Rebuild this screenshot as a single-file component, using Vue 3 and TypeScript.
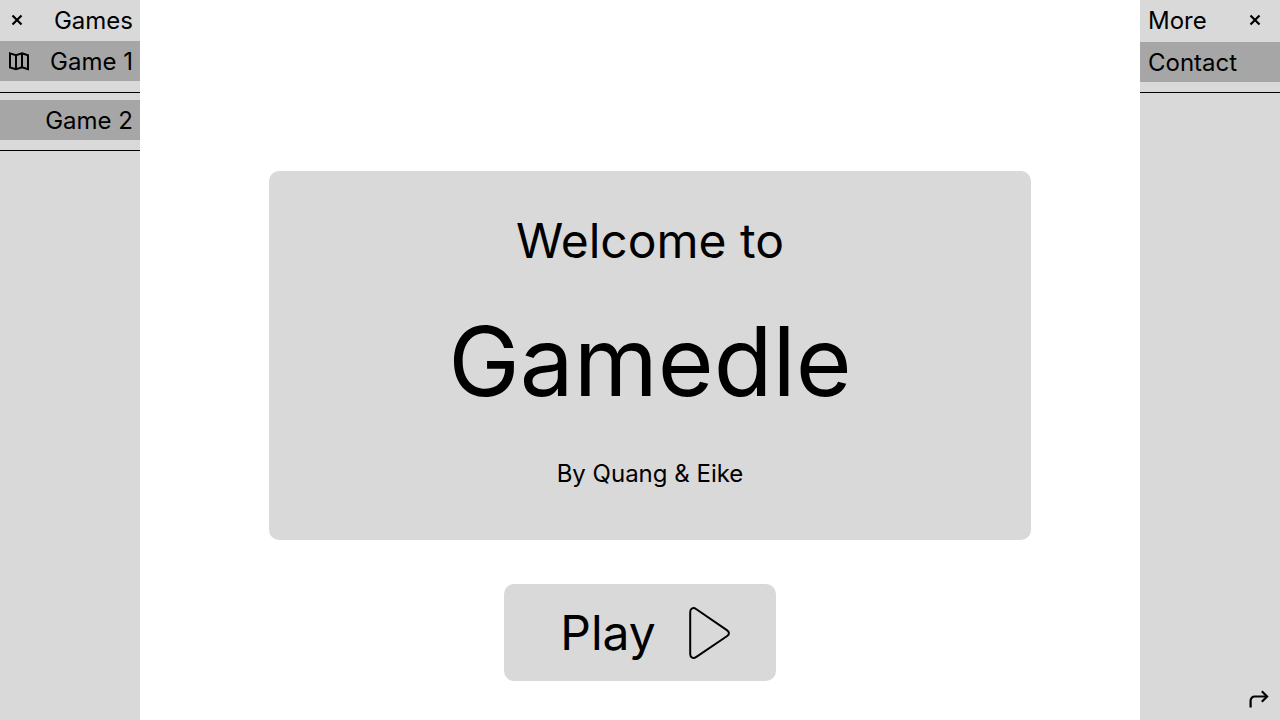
<script setup lang="ts">
import { ref } from 'vue'

interface Game {
  name: string
  icon?: 'map'
}

const games: Game[] = [{ name: 'Game 1', icon: 'map' }, { name: 'Game 2' }]
const links: string[] = ['Contact']

const gamesOpen = ref(true)
const moreOpen = ref(true)
</script>

<template>
  <div class="page">
    <nav class="sidebar games" aria-label="Games">
      <header class="head">
        <button class="icon-button" type="button" aria-label="Toggle games" @click="gamesOpen = !gamesOpen">
          <svg width="18" height="18" viewBox="0 0 18 18" fill="none" stroke="currentColor" stroke-width="2.2">
            <path d="M4.5 4.5l9 9M13.5 4.5l-9 9" />
          </svg>
        </button>
        <h2>Games</h2>
      </header>
      <ul v-if="gamesOpen">
        <li v-for="game in games" :key="game.name">
          <a href="#">
            <svg v-if="game.icon === 'map'" class="map" width="22" height="20" viewBox="0 0 22 20" fill="none" stroke="currentColor" stroke-width="2">
              <path d="M2 2.4l6 1.8 6-1.8 6 1.8v14l-6-1.8-6 1.8-6-1.8z" />
              <path d="M8 4v14M14 2.4v14" />
            </svg>
            <span>{{ game.name }}</span>
          </a>
        </li>
      </ul>
    </nav>

    <main>
      <section class="card">
        <p class="welcome">Welcome to</p>
        <h1>Gamedle</h1>
        <p class="authors">By Quang &amp; Eike</p>
      </section>
      <button class="play" type="button">
        <span>Play</span>
        <svg width="44" height="54" viewBox="0 0 44 54" fill="none" stroke="currentColor" stroke-width="2">
          <path d="M2.2 6C2.2 2.2 5.2 1 8.4 3.2L39.2 24.4C41.5 26 41.5 28.4 39.2 30L8.4 50.8C5.2 53 2.2 51.8 2.2 48Z" />
        </svg>
      </button>
    </main>

    <nav class="sidebar more" aria-label="More">
      <header class="head">
        <h2>More</h2>
        <button class="icon-button" type="button" aria-label="Toggle more" @click="moreOpen = !moreOpen">
          <svg width="18" height="18" viewBox="0 0 18 18" fill="none" stroke="currentColor" stroke-width="2.2">
            <path d="M4.5 4.5l9 9M13.5 4.5l-9 9" />
          </svg>
        </button>
      </header>
      <ul v-if="moreOpen">
        <li v-for="link in links" :key="link">
          <a href="#">{{ link }}</a>
        </li>
      </ul>
      <button class="icon-button share" type="button" aria-label="Share">
        <svg width="22" height="20" viewBox="0 0 22 20" fill="none" stroke="currentColor" stroke-width="2.2">
          <path d="M2.6 18.5v-7a4 4 0 0 1 4-4H19" />
          <path d="M13.8 2.2l5.3 5.3-5.3 5.3" />
        </svg>
      </button>
    </nav>
  </div>
</template>

<style>
body {
  margin: 0;
}
</style>

<style scoped>
.page {
  display: grid;
  grid-template-columns: 140px 1fr 140px;
  min-height: 100vh;
  background: #fff;
  color: #000;
  font-family: Inter, 'Liberation Sans', sans-serif;
  font-size: 24px;
  line-height: 29px;
}

h1,
h2,
p,
ul {
  margin: 0;
  padding: 0;
  font-size: inherit;
  font-weight: 400;
}

ul {
  display: flex;
  flex-direction: column;
  gap: 7px;
  list-style: none;
}

svg {
  display: block;
}

button {
  padding: 0;
  border: 0;
  background: none;
  color: inherit;
  font: inherit;
  cursor: pointer;
}

.sidebar {
  display: flex;
  flex-direction: column;
  background: #d9d9d9;
}

.head {
  display: flex;
  align-items: center;
  justify-content: space-between;
  height: 42px;
  padding: 0 8px 2px;
  box-sizing: border-box;
}

.games .head {
  height: 41px;
  padding: 0 7px 1px 8px;
}

.more .head {
  padding-right: 16px;
}

li {
  padding-bottom: 10px;
  border-bottom: 1px solid #000;
}

.games li:first-child {
  padding-bottom: 11px;
}

li a {
  display: flex;
  align-items: center;
  height: 40px;
  padding: 0 8px;
  background: #a6a6a6;
  color: inherit;
  text-decoration: none;
}

.games li a {
  padding-right: 7px;
}

.games li span {
  margin-left: auto;
}

.share {
  margin: auto 10px 11px auto;
}

main {
  display: flex;
  flex-direction: column;
  align-items: center;
  gap: 44px;
  padding: 171px 20px 39px;
}

.card {
  width: 100%;
  max-width: 762px;
  margin-left: 20px;
  padding: 41px 20px 52px;
  box-sizing: border-box;
  border-radius: 10px;
  background: #d9d9d9;
  text-align: center;
}

.welcome {
  font-size: 48px;
  line-height: 58px;
}

h1 {
  margin: 33px 0 40px;
  font-size: 96px;
  line-height: 116px;
}

.play {
  display: flex;
  align-items: center;
  gap: 32px;
  padding: 20px 44px 19px 56px;
  border-radius: 10px;
  background: #d9d9d9;
  font-size: 48px;
  line-height: 58px;
}
</style>
